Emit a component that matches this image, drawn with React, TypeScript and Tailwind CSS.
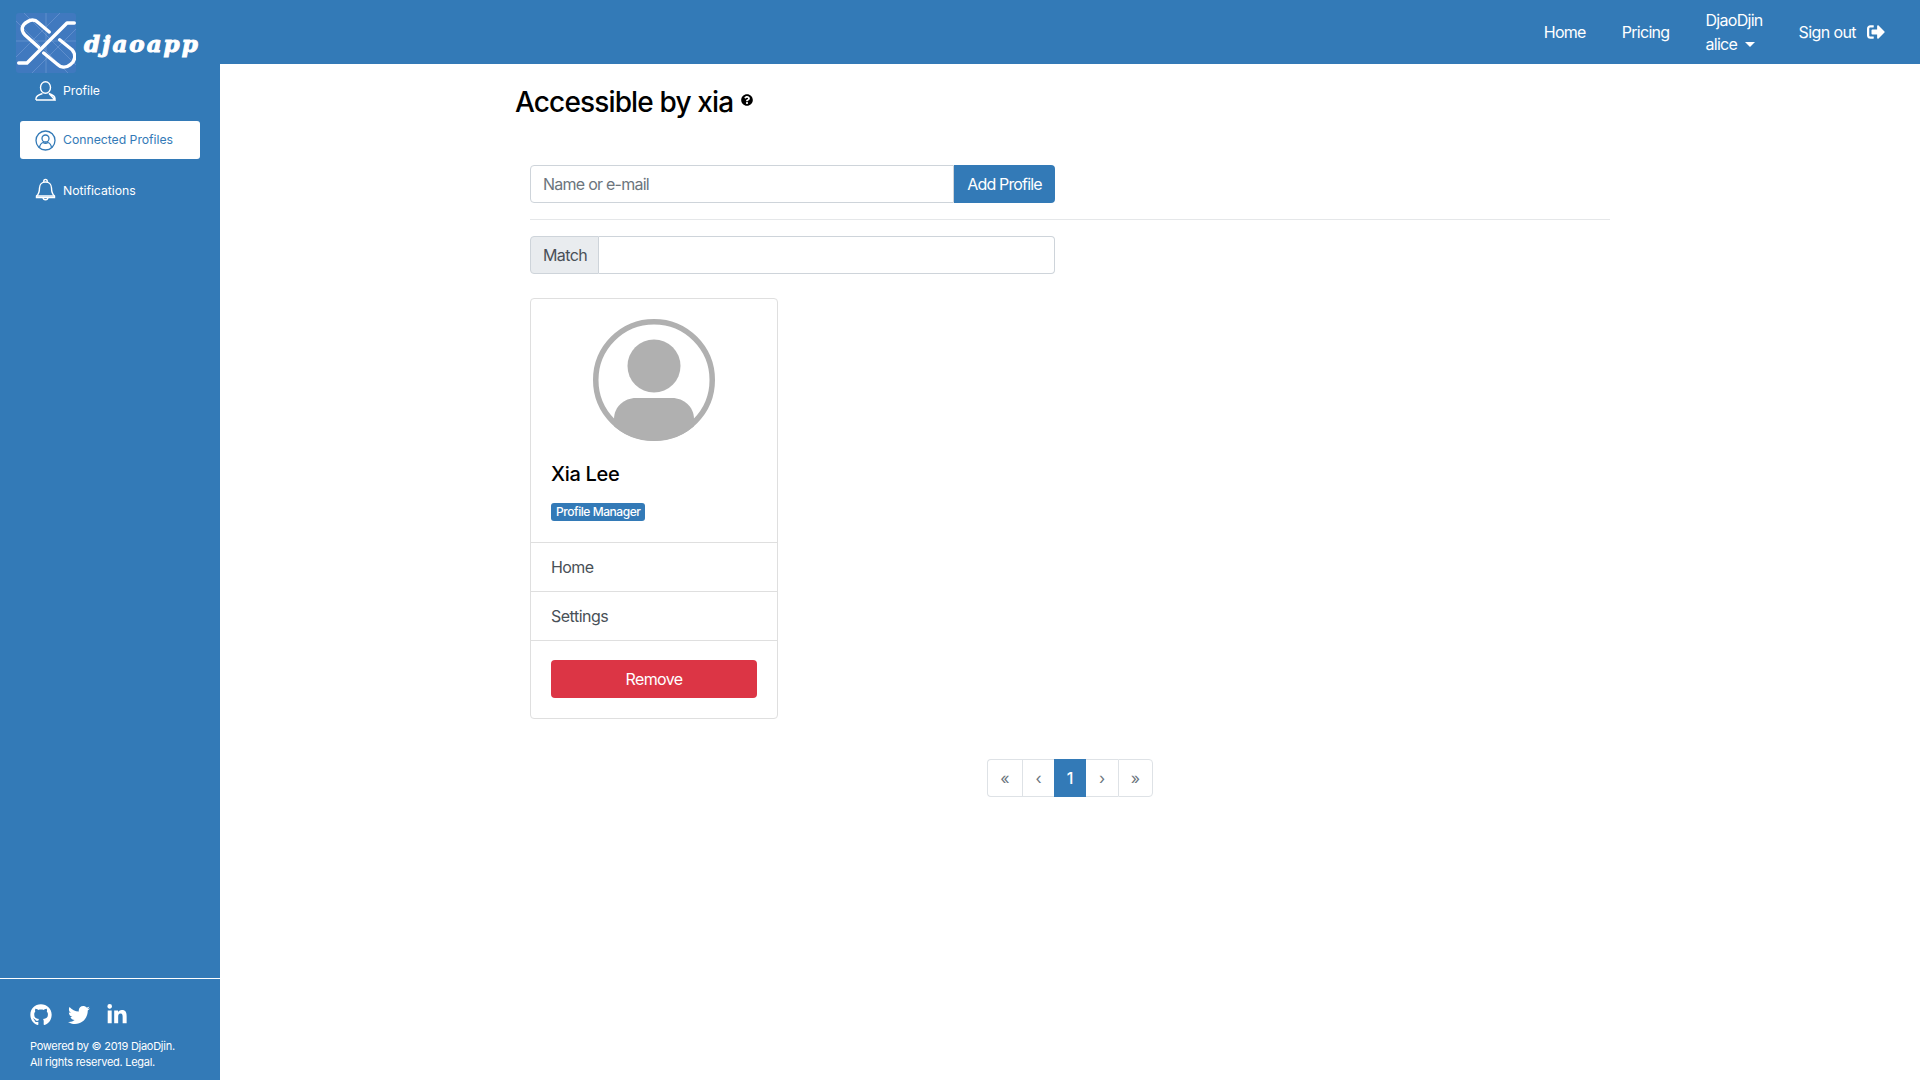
import React from 'react';
import { FaGithub, FaTwitter, FaLinkedinIn, FaSignOutAlt, FaQuestionCircle } from 'react-icons/fa';

const Logo = () => (
  <div className="absolute left-[16px] top-[13px] z-10 flex items-center">
    <svg width="60" height="60" viewBox="0 0 60 60" className="rounded-[3px]">
      <rect width="60" height="60" fill="#4079bf" />
      <path
        d="M0 8 L52 60 M8 0 L60 52 M0 44 L44 0 M16 60 L60 16 M0 28 L60 28 M30 0 L30 60"
        stroke="#7fa5d8"
        strokeWidth="0.5"
        fill="none"
      />
      <g fill="none" stroke="#fff" strokeWidth="3.400" strokeLinecap="round" strokeLinejoin="round">
        <path d="M2.700 50 L11 50 L51 10 L58.300 10" />
        <path d="M22.700 34.300 L8.700 21.700 C4.300 16.700 6 11.700 11 9 C15.300 6 19.300 6.700 22.700 10 L33.300 19" />
        <path d="M43.700 26.700 L56 36.700 C60.300 41.700 59.300 48.300 54.300 51.700 C49.300 55.700 44.300 54.300 41 51 L27.700 40" />
      </g>
    </svg>
    <span
      className="ml-[8px] text-[23px] font-bold italic leading-none tracking-[2px] text-white [-webkit-text-stroke:1px_white]"
      style={{ fontFamily: '"DejaVu Serif", serif' }}
    >
      djaoapp
    </span>
  </div>
);

const SideLink = ({ label, active, children }: { label: string; active?: boolean; children: React.ReactNode }) => (
  <div
    className={`flex h-[38px] items-center rounded-[3px] pl-[15px] text-[12.25px] ${
      active ? 'bg-white text-[#337ab7]' : 'text-white'
    }`}
  >
    <span className="flex w-[21px] justify-center">{children}</span>
    <span className={`ml-[7px] tracking-[-0.03px] ${active ? 'mt-[1px]' : 'mt-[2px]'}`}>{label}</span>
  </div>
);

const PageButton = ({ label, active, className }: { label: string; active?: boolean; className?: string }) => (
  <span
    className={`flex h-[38px] items-center justify-center text-[16px] ${
      active ? 'bg-[#337ab7] font-medium text-white' : 'border-y border-l border-[#dee2e6] text-[#6c757d]'
    } ${className ?? ''}`}
  >
    {label}
  </span>
);

export default function App() {
  return (
    <div
      className="relative flex min-h-[1080px] flex-col bg-white text-[16px] text-[#212529]"
      style={{ fontFamily: 'Inter, "Liberation Sans", sans-serif' }}
    >
      <Logo />
      <header className="flex h-[64px] items-center justify-end bg-[#337ab7] pr-[35px] text-[16px] text-white">
        <a className="mr-[36px] tracking-[-0.75px]">Home</a>
        <a className="mr-[36px] tracking-[-0.7px]">Pricing</a>
        <div className="mr-[36px] leading-[24px] tracking-[-0.7px]">
          <div>DjaoDjin</div>
          <div className="flex items-center">
            alice
            <span className="ml-[8px] h-0 w-0 border-x-[5px] border-t-[5px] border-x-transparent border-t-white" />
          </div>
        </div>
        <a className="flex items-center tracking-[-0.6px]">
          Sign out
          <FaSignOutAlt className="ml-[11px] text-[18px]" />
        </a>
      </header>

      <div className="flex flex-1">
        <aside className="flex w-[220px] flex-col bg-[#337ab7] text-white">
          <nav className="flex flex-col gap-[12px] px-[20px] pt-[7px]">
            <SideLink label="Profile">
              <svg width="21" height="20" viewBox="0 0 21 20" fill="none" stroke="currentColor" strokeWidth="1.400" className="mt-[1px]">
                <ellipse cx="10.500" cy="6.500" rx="5" ry="5.800" />
                <path d="M1 19 v-1.500 c0-2.500 2-3.500 6.500-5 M14 12.500 c4.500 1.500 6 2.500 6 5 v1.500 Z M1 19 H20" />
              </svg>
            </SideLink>
            <SideLink label="Connected Profiles" active>
              <svg width="21" height="21" viewBox="0 0 21 21" fill="none" stroke="currentColor" strokeWidth="1.300">
                <circle cx="10.500" cy="10.500" r="9.500" />
                <circle cx="10.500" cy="8.500" r="3.500" />
                <path d="M4.500 17.500 c.5-3 2-4.500 3.500-5 c1.600 1 3.400 1 5 0 c1.500 .5 3 2 3.500 5" />
              </svg>
            </SideLink>
            <SideLink label="Notifications">
              <svg width="21" height="25" viewBox="0 0 21 25" fill="none" stroke="currentColor" strokeWidth="1.400" className="mb-[1px]">
                <path d="M1.500 20.500 v-1.500 c2.500-2 3-4 3-8 c0-3.500 2.500-6 6-6 c3.500 0 6 2.500 6 6 c0 4 .5 6 3 8 v1.500 Z" />
                <path d="M1.500 19 H19.500 M8.800 5 c-.6-3.500 4-3.500 3.400 0 M8 20.500 c.3 3 4.700 3 5 0" />
              </svg>
            </SideLink>
          </nav>
          <footer className="mt-auto h-[102px] border-t border-white px-[30px] pt-[25px]">
            <div className="flex items-center gap-[16px] text-[22px]">
              <FaGithub />
              <FaTwitter />
              <FaLinkedinIn />
            </div>
            <p className="mt-[12px] text-[11px] leading-[16px] tracking-[-0.27px]">
              Powered by © 2019 DjaoDjin.
              <br />
              All rights reserved. Legal.
            </p>
          </footer>
        </aside>

        <main className="flex-1 pl-[295px] pt-[21px]">
          <h1 className="flex h-[34px] items-center text-[28px] font-medium leading-none tracking-[-0.85px] text-black">
            Accessible by xia
            <FaQuestionCircle className="mb-[4px] ml-[8px] text-[12px]" />
          </h1>

          <div className="ml-[15px] mt-[46px] w-[1080px]">
            <div className="flex h-[38px] w-[525px]">
              <input
                placeholder="Name or e-mail"
                className="h-full flex-1 rounded-l-[4px] border border-[#ced4da] px-[12px] text-[16px] tracking-[-0.75px] placeholder:text-[#6c757d]"
              />
              <button className="h-full w-[101px] rounded-r-[4px] bg-[#337ab7] text-[16px] tracking-[-0.85px] text-white">
                Add Profile
              </button>
            </div>
            <hr className="mt-[16px] border-[#e5e7e9]" />
            <div className="mt-[16px] flex h-[38px] w-[525px]">
              <span className="flex w-[69px] items-center rounded-l-[4px] border border-[#ced4da] bg-[#e9ecef] pl-[12px] tracking-[-0.6px] text-[#495057]">
                Match
              </span>
              <input className="h-full flex-1 rounded-r-[4px] border border-l-0 border-[#ced4da]" />
            </div>

            <div className="mt-[24px] w-[248px] rounded-[4px] border border-[#dfdfdf]">
              <div className="h-[243px] px-[20px] pt-[20px]">
                <svg width="122" height="122" viewBox="0 0 122 122" className="mx-auto">
                  <defs>
                    <clipPath id="avatarClip">
                      <circle cx="61" cy="61" r="61" />
                    </clipPath>
                  </defs>
                  <circle cx="61" cy="61" r="58.250" fill="none" stroke="#b0b0b0" strokeWidth="5.500" />
                  <circle cx="61" cy="47" r="26.500" fill="#b0b0b0" />
                  <path
                    d="M21 122 V100 C21 88 31 79 43 79 H79 C91 79 101 88 101 100 V122 Z"
                    fill="#b0b0b0"
                    clipPath="url(#avatarClip)"
                  />
                </svg>
                <h2 className="mt-[21px] text-[20px] font-medium leading-[24px] tracking-[-0.3px] text-black">Xia Lee</h2>
                <span className="mt-[17px] inline-block rounded-[3px] bg-[#337ab7] px-[5px] py-[2px] text-[12px] font-medium leading-[14px] tracking-[-0.45px] text-white">
                  Profile Manager
                </span>
              </div>
              <a className="flex h-[49px] items-center border-t border-[#dfdfdf] px-[20px] tracking-[-0.6px] text-[#495057]">
                Home
              </a>
              <a className="flex h-[49px] items-center border-t border-[#dfdfdf] px-[20px] tracking-[-0.5px] text-[#495057]">
                Settings
              </a>
              <div className="border-t border-[#dfdfdf] px-[20px] pb-[20px] pt-[19px]">
                <button className="h-[38px] w-full rounded-[4px] bg-[#dc3545] tracking-[-0.6px] text-white">Remove</button>
              </div>
            </div>

            <div className="ml-[457px] mt-[40px] flex w-[166px]">
              <PageButton label="«" className="w-[35px] rounded-l-[4px]" />
              <PageButton label="‹" className="w-[32px]" />
              <PageButton label="1" active className="w-[32px]" />
              <PageButton label="›" className="w-[32px] !border-l-0" />
              <PageButton label="»" className="w-[35px] rounded-r-[4px] border-r" />
            </div>
          </div>
        </main>
      </div>
    </div>
  );
}
